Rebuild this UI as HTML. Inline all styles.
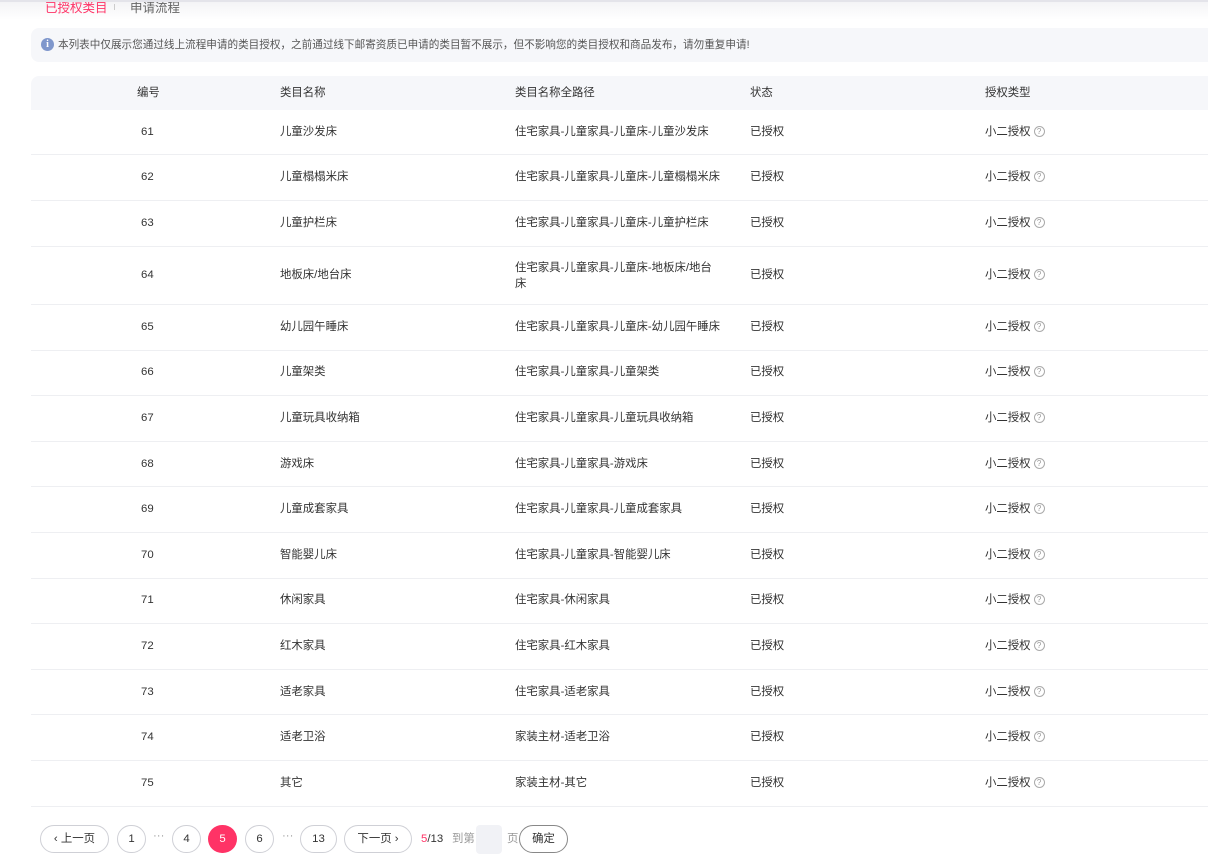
<!DOCTYPE html><html><head><meta charset="utf-8"><style>
body{margin:0;width:1208px;height:866px;overflow:hidden;background:#fff;font-family:"Liberation Sans","Noto Sans CJK SC",sans-serif;font-size:11.4px;color:#333;position:relative}
.top{position:absolute;left:0;top:0;width:1208px;height:18px;border-top:2px solid #e4e4ea;background:linear-gradient(#f4f4f6,#fff);overflow:hidden}
.tab1{position:absolute;left:45px;top:-5px;color:#ff3366;font-size:12.5px}
.tab2{position:absolute;left:130px;top:-5px;color:#666;font-size:12.5px}
.sep{position:absolute;left:114px;top:2px;width:1px;height:6px;background:#ccc}
.notice{position:absolute;left:31px;top:28px;width:1190px;height:34px;background:#f6f7fa;border-radius:8px}
.notice .i{position:absolute;left:10px;top:10px;width:13px;height:13px;border-radius:50%;background:#7f97cc;color:#fff;font-size:10px;text-align:center;line-height:13px;font-weight:bold;font-family:"Liberation Serif",serif}
.notice span{position:absolute;left:27px;top:9px;font-size:10.6px;color:#555}
.hdr{position:absolute;left:31px;top:76px;width:1190px;height:34px;background:#f6f7fa;border-radius:8px 8px 0 0}
.c{position:absolute;white-space:nowrap;line-height:16px}
.row{position:absolute;left:31px;width:1190px;border-bottom:1px solid #eeeff2}
.q{display:inline-block;width:9px;height:9px;border:1px solid #aaa;border-radius:50%;font-size:8px;line-height:9px;text-align:center;color:#999;margin-left:3px;vertical-align:1px}
.pg{position:absolute;top:825px;height:26px;border:1px solid #cfd0d6;border-radius:14px;text-align:center;line-height:26px;font-size:11.4px;color:#333;background:#fff}
</style></head><body>
<div class="top"><span class="tab1">已授权类目</span><div class="sep"></div><span class="tab2">申请流程</span></div>
<div class="notice"><div class="i">i</div><span>本列表中仅展示您通过线上流程申请的类目授权，之前通过线下邮寄资质已申请的类目暂不展示，但不影响您的类目授权和商品发布，请勿重复申请!</span></div>
<div class="hdr">
<span class="c" style="left:106px;top:9px">编号</span>
<span class="c" style="left:249px;top:9px">类目名称</span>
<span class="c" style="left:484px;top:9px">类目名称全路径</span>
<span class="c" style="left:719px;top:9px">状态</span>
<span class="c" style="left:954px;top:9px">授权类型</span>
</div>
<div id="rows"></div>
<script>
var d=[["61","儿童沙发床","住宅家具-儿童家具-儿童床-儿童沙发床"],["62","儿童榻榻米床","住宅家具-儿童家具-儿童床-儿童榻榻米床"],["63","儿童护栏床","住宅家具-儿童家具-儿童床-儿童护栏床"],["64","地板床/地台床","住宅家具-儿童家具-儿童床-地板床/地台<br>床"],["65","幼儿园午睡床","住宅家具-儿童家具-儿童床-幼儿园午睡床"],["66","儿童架类","住宅家具-儿童家具-儿童架类"],["67","儿童玩具收纳箱","住宅家具-儿童家具-儿童玩具收纳箱"],["68","游戏床","住宅家具-儿童家具-游戏床"],["69","儿童成套家具","住宅家具-儿童家具-儿童成套家具"],["70","智能婴儿床","住宅家具-儿童家具-智能婴儿床"],["71","休闲家具","住宅家具-休闲家具"],["72","红木家具","住宅家具-红木家具"],["73","适老家具","住宅家具-适老家具"],["74","适老卫浴","家装主材-适老卫浴"],["75","其它","家装主材-其它"]];
var y=110,h="";
d.forEach(function(r,i){var H=i==3?58:(i<3?[45,46,46][i]:45.6);var t=(H-16)/2-1;
var pt=i==3?t-7:t;
h+='<div class="row" style="top:'+y+'px;height:'+(H-1)+'px">'+
'<span class="c" style="left:110px;top:'+t+'px">'+r[0]+'</span>'+
'<span class="c" style="left:249px;top:'+t+'px">'+r[1]+'</span>'+
'<span class="c" style="left:484px;top:'+pt+'px">'+r[2]+'</span>'+
'<span class="c" style="left:719px;top:'+t+'px">已授权</span>'+
'<span class="c" style="left:954px;top:'+t+'px">小二授权<span class="q">?</span></span></div>';y+=H;});
document.getElementById('rows').innerHTML=h;
</script>
<div class="pg" style="left:40px;width:67px">‹ 上一页</div>
<div class="pg" style="left:117px;width:27px">1</div>
<span class="c" style="left:153px;top:828px;color:#999">···</span>
<div class="pg" style="left:172px;width:27px">4</div>
<div class="pg" style="left:208px;width:29px;height:28px;border:none;background:#ff3366;color:#fff;line-height:28px">5</div>
<div class="pg" style="left:245px;width:27px">6</div>
<span class="c" style="left:282px;top:828px;color:#999">···</span>
<div class="pg" style="left:300px;width:35px">13</div>
<div class="pg" style="left:344px;width:66px">下一页 ›</div>
<span class="c" style="left:421px;top:831px"><span style="color:#ff3366">5</span>/13</span>
<span class="c" style="left:452px;top:831px;color:#999">到第</span>
<div style="position:absolute;left:476px;top:825px;width:26px;height:29px;background:#f1f2f6;border-radius:4px"></div>
<span class="c" style="left:507px;top:831px;color:#999">页</span>
<div class="pg" style="left:519px;width:47px;border-color:#888">确定</div>
</body></html>
